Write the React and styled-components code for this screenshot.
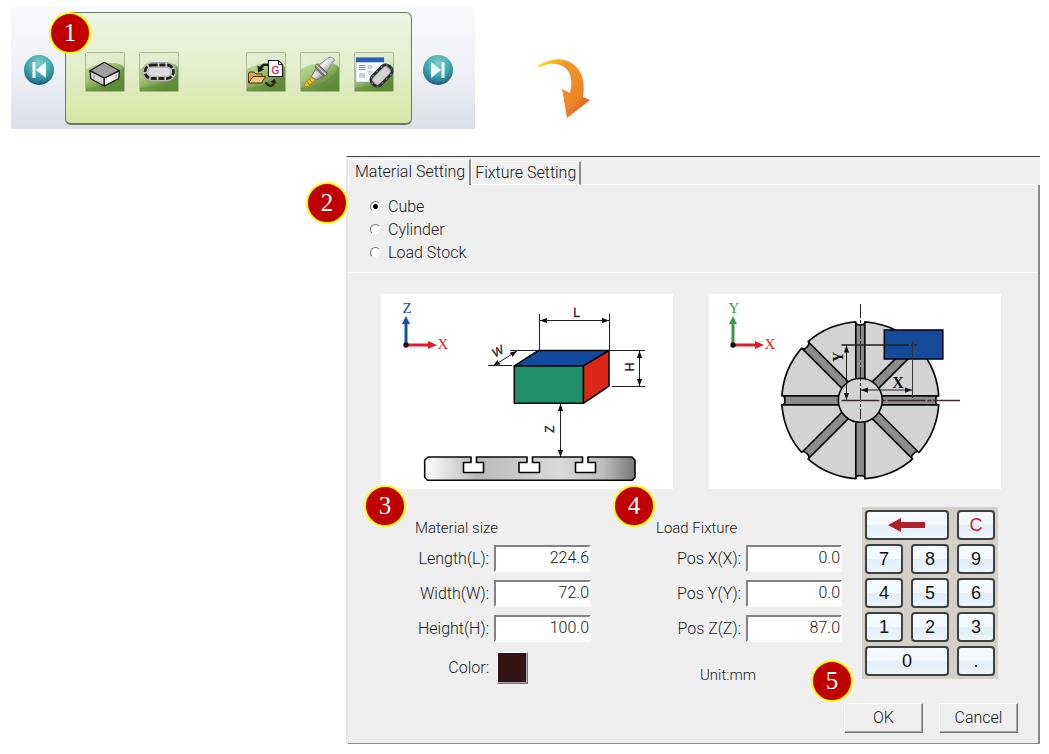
import { useState } from 'react';
import styled, { createGlobalStyle, css } from 'styled-components';

const GlobalStyle = createGlobalStyle`
  *, *::before, *::after {
    box-sizing: border-box;
  }
  body {
    margin: 0;
    background: #fff;
    color: #1a1a1a;
    font-family: Roboto, "Liberation Sans", Arial, sans-serif;
    font-weight: 300;
    font-size: 16px;
    line-height: 20px;
  }
  button, input {
    font: inherit;
    color: inherit;
  }
`;

const Page = styled.main`
  padding: 7px 9px 10px 11px;
`;

const TopRow = styled.div`
  display: flex;
  align-items: flex-start;
`;

const Ribbon = styled.nav`
  display: flex;
  align-items: center;
  gap: 11px;
  flex: 0 1 464px;
  padding: 5px 22px 4px 13px;
  background: linear-gradient(#f9fafc, #eef0f5 55%, #dcdfe8);
`;

const RoundButton = styled.button`
  flex: none;
  width: 30px;
  height: 30px;
  margin-top: 2px;
  padding: 0;
  border: none;
  border-radius: 50%;
  background: none;
  svg {
    display: block;
  }
`;

const ToolPanel = styled.div`
  position: relative;
  display: flex;
  flex: 1;
  align-items: center;
  gap: 14px;
  height: 113px;
  padding: 8px 17px 0 19px;
  border: 1px solid #6f736b;
  border-bottom-width: 2px;
  border-radius: 6px;
  background: linear-gradient(#edf4e3, #e3eecb 50%, #d7e6a3);
`;

const ToolButton = styled.button`
  width: 40px;
  height: 40px;
  padding: 0;
  border: none;
  background: none;
  margin-left: ${({ $apart }) => ($apart ? 'auto' : '0')};
  svg {
    display: block;
  }
`;

const Badge = styled.span`
  position: absolute;
  z-index: 2;
  left: ${({ $left }) => $left}px;
  top: ${({ $top }) => $top}px;
  width: 42px;
  height: 42px;
  border: 2px solid #ff0;
  border-radius: 50%;
  background: #c00000;
  color: #fff;
  font: 400 25px/38px "Liberation Serif", "Times New Roman", serif;
  text-align: center;
`;

const Swoosh = styled.svg`
  margin: 51px 0 0 62px;
`;

const Dialog = styled.form`
  margin: 27px 0 0 335px;
  border-top: 1px solid #444;
  border-left: 2px solid #e2e8ec;
  background: #efefef;
`;

const Tabs = styled.div`
  display: flex;
  align-items: flex-end;
  padding-top: 2px;
`;

const Tab = styled.button`
  height: ${({ $active }) => ($active ? 26 : 24)}px;
  padding: ${({ $active }) => ($active ? '0 4px 2px 6px' : '0 3px')};
  border: solid #fff;
  border-width: 1px 0 ${({ $active }) => ($active ? 0 : 1)}px 1px;
  border-right: 2px solid #8c8c8c;
  background: #efefef;
`;

const TabLine = styled.span`
  flex: 1;
  border-bottom: 1px solid #fff;
`;

const Sheet = styled.div`
  border: solid #8a8a8a;
  border-width: 0 2px 1px 0;
`;

const Shapes = styled.fieldset`
  position: relative;
  display: flex;
  flex-direction: column;
  margin: 0;
  padding: 10px 22px 8px;
  border: none;
  border-bottom: 1px solid #fff;
`;

const ShapeOption = styled.label`
  display: flex;
  align-items: center;
  gap: 7px;
  height: 23px;
`;

const Radio = styled.input`
  appearance: none;
  width: 11px;
  height: 11px;
  margin: 0;
  border: 1px solid;
  border-color: #777 #eee #eee #777;
  border-radius: 50%;
  background: #fff;
  &:checked {
    background: radial-gradient(circle, #000 2px, #fff 3px);
  }
`;

const Pictures = styled.div`
  display: grid;
  grid-template-columns: 1fr 1fr;
  gap: 36px;
  padding: 21px 37px 0 33px;
`;

const Picture = styled.svg`
  display: block;
  width: 100%;
  background: #fff;
`;

const Settings = styled.div`
  display: grid;
  grid-template-columns: minmax(0, 221fr) minmax(0, 186fr) 136px;
  column-gap: 20px;
  padding: 18px 40px 0 67px;
`;

const Group = styled.section`
  position: relative;
  padding: 11px ${({ $right }) => $right || 0}px 0 0;
`;

const GroupTitle = styled.h2`
  margin: 0 0 7px;
  font-size: 15px;
  font-weight: inherit;
  line-height: 20px;
`;

const Field = styled.div`
  display: flex;
  align-items: center;
  gap: 5px;
  height: 27px;
  margin-bottom: 8px;
`;

const FieldLabel = styled.label`
  flex: none;
  width: ${({ $width }) => $width}px;
  text-align: right;
`;

const inset = css`
  border: 2px solid;
  border-color: #828282 #fafafa #fafafa #828282;
`;

const raised = css`
  border: 1px solid;
  border-color: #fdfdfd #777 #777 #fdfdfd;
  box-shadow: inset -1px -1px 0 #a5a5a5;
`;

const NumberBox = styled.input`
  ${inset}
  flex: 1;
  width: 0;
  min-width: 0;
  height: 27px;
  padding: 0 0 2px;
  border-radius: 0;
  background: #fff;
  text-align: right;
  outline: none;
`;

const ColorField = styled(Field)`
  gap: 8px;
  height: 32px;
  margin: 10px 0 0;
`;

const Swatch = styled.button`
  ${raised}
  width: 31px;
  height: 32px;
  background: #321414;
`;

const Unit = styled.p`
  margin: 23px 0 0 44px;
  font-size: 15px;
`;

const KeypadArea = styled.div`
  position: relative;
`;

const Keypad = styled.div`
  display: grid;
  grid-template-columns: repeat(3, 38px);
  grid-auto-rows: 30px;
  gap: 4px 8px;
  padding: 3px;
  background: #d5d0c7;
`;

const Key = styled.button`
  display: flex;
  align-items: center;
  justify-content: center;
  grid-column: span ${({ $span }) => $span || 1};
  padding: 0;
  border: 2px solid #3d4144;
  border-radius: 4px;
  background: linear-gradient(#f7fbff, #f2f8fe 50%, #e2eefa 52%, #edf5fc);
  color: ${({ $red }) => ($red ? '#c8202c' : '#111')};
  font: 400 18px/24px "Liberation Sans", Arial, sans-serif;
`;

const Actions = styled.div`
  display: flex;
  justify-content: flex-end;
  gap: 16px;
  padding: 18px 20px 10px;
`;

const ActionButton = styled.button`
  ${raised}
  width: 79px;
  height: 30px;
  padding: 0;
  background: #efefef;
`;

const SkipIcon = ({ next }) => (
  <svg width="30" height="30" viewBox="0 0 30 30">
    <defs>
      <radialGradient id={next ? 'orbNext' : 'orbPrev'} cx="50%" cy="28%" r="75%">
        <stop offset="0" stopColor="#7fd0ca" />
        <stop offset="0.55" stopColor="#3ea6ac" />
        <stop offset="0.82" stopColor="#287a96" />
        <stop offset="1" stopColor="#1c3566" />
      </radialGradient>
    </defs>
    <circle cx="15" cy="15" r="15" fill={`url(#${next ? 'orbNext' : 'orbPrev'})`} />
    <g transform={next ? undefined : 'matrix(-1 0 0 1 30 0)'} fill="#f4fbfb">
      <path d="M8 7 18 15 8 23Z" />
      <rect x="18.500" y="7" width="3" height="16" />
    </g>
  </svg>
);

const Tile = ({ id, children }) => (
  <svg width="40" height="40" viewBox="0 0 40 40">
    <defs>
      <linearGradient id={id} x1="0" y1="0" x2="0.6" y2="1">
        <stop offset="0" stopColor="#c6dba0" />
        <stop offset="0.5" stopColor="#aacb7c" />
        <stop offset="0.75" stopColor="#7ba24f" />
        <stop offset="1" stopColor="#5f8a38" />
      </linearGradient>
    </defs>
    <rect x="0.500" y="0.500" width="39" height="39" rx="1" fill={`url(#${id})`} stroke="#a9b99a" />
    <path d="M1 36Q28 34 39 15V39H1Z" fill="#5d8738" opacity="0.45" />
    <path d="M1 1H39V15Q34 10 22 11 10 12 1 17Z" fill="#f4f8ec" opacity="0.7" />
    {children}
  </svg>
);

const BlockIcon = () => (
  <Tile id="tileBlock">
    <g stroke="#1b1b1b" strokeWidth="1.300" strokeLinejoin="round">
      <path d="M5 18.700 19.300 26V34L5.700 26.700Z" fill="#d4d4d4" />
      <path d="M34.300 18.700 19.300 26V34L33.700 26.700Z" fill="#eee" />
      <path d="M19.300 10.300 34.300 18.700 19.300 26 5 18.700Z" fill="#a0a0a0" />
    </g>
    <path d="M9 22.500V26.500M31 22.500V26.500" stroke="#999" />
  </Tile>
);

const BeltIcon = () => (
  <Tile id="tileBelt">
    <rect x="3.500" y="10.500" width="33.500" height="18.500" rx="9" fill="#c9c9c9" stroke="#a5a5a5" />
    <rect x="6" y="13" width="28.500" height="13.500" rx="6.700" fill="none" stroke="#202020" strokeWidth="2.800" strokeDasharray="6 1.700" />
    <rect x="9" y="15.500" width="22.500" height="8.700" rx="4.300" fill="#dcdcdc" stroke="#aaa" strokeWidth="0.600" />
  </Tile>
);

const LoadIcon = () => (
  <Tile id="tileLoad">
    <path d="M22.500 8.500H32.500L36.500 12.500V24.500H22.500Z" fill="#fff" stroke="#222" strokeWidth="1.200" />
    <path d="M32.500 8.500V12.500H36.500" fill="none" stroke="#222" />
    <text x="29.500" y="22" textAnchor="middle" fontFamily="Liberation Sans" fontSize="10" fontWeight="400" fill="#cf2b35" stroke="#cf2b35" strokeWidth="0.300">G</text>
    <path d="M2.500 31V21L4 20H8L10 22H16V25" fill="#d9a952" stroke="#4c3311" />
    <path d="M2.500 31 7 24.500H19.500L15.500 31Z" fill="#eec47d" stroke="#4c3311" />
    <path d="M22 13Q16.500 11.500 15 16" fill="none" stroke="#141414" strokeWidth="2.400" />
    <path d="M11.500 13.500 18.500 17.500 12 20.500Z" fill="#141414" />
    <path d="M19.500 30.500Q25 37 28 31" fill="none" stroke="#2a2015" strokeWidth="2.400" />
    <path d="M24.500 30 28.500 26.500 30.500 32Z" fill="#2a2015" />
  </Tile>
);

const CutterIcon = () => (
  <Tile id="tileCutter">
    <defs>
      <linearGradient id="steel" x1="0" y1="0" x2="1" y2="1">
        <stop offset="0.1" stopColor="#8f8f8f" />
        <stop offset="0.4" stopColor="#f2f2f2" />
        <stop offset="0.9" stopColor="#777" />
      </linearGradient>
    </defs>
    <path d="M11.500 25 15.500 28 8 34.500 4.500 34.500 5 31Z" fill="#e5c120" stroke="#a5820d" strokeWidth="0.700" />
    <path d="M7 29.500 9.500 33M9.500 27.500 12.500 30.500" stroke="#8e6c0a" strokeWidth="0.800" />
    <path d="M15.500 17 23.500 24.500 16 28 11.500 24.500Z" fill="url(#steel)" stroke="#555" strokeWidth="0.700" />
    <path d="M28.500 5.500Q33 4.500 34.500 8L26.500 20 19 13Z" fill="url(#steel)" stroke="#777" strokeWidth="0.700" />
    <path d="M17.500 12 27.500 21.500 24.500 24 15 15Z" fill="#999" stroke="#444" strokeWidth="0.800" />
    <path d="M16.500 13.500 26 22.700" stroke="#e5e5e5" strokeWidth="0.900" />
  </Tile>
);

const SetupIcon = () => (
  <Tile id="tileSetup">
    <rect x="2" y="5.500" width="28" height="24.500" fill="#fafcff" stroke="#9db2d0" strokeWidth="0.600" />
    <rect x="2" y="5.500" width="28" height="4.800" fill="#2561ba" />
    <path d="M5 13.500H11.500M5 15.500H11.500M5 17.500H11.500" stroke="#888" />
    <path d="M14 13H18.500V17H14ZM14 18.500H18.500V22.500H14ZM5 21H11V26H5Z" fill="#ccd2da" />
    <path d="M13 11V29" stroke="#dbe3ef" strokeWidth="0.700" />
    <g transform="rotate(-45 27.500 23.500)">
      <rect x="15.500" y="17.500" width="24" height="12" rx="5" fill="#aaa" stroke="#2a2a2a" strokeWidth="2.800" />
      <rect x="15.500" y="17.500" width="24" height="12" rx="5" fill="none" stroke="#888" strokeWidth="1" strokeDasharray="2 4" />
      <rect x="18" y="19.500" width="19" height="8" rx="3.500" fill="#d2d2d2" />
    </g>
  </Tile>
);

const Markers = ({ id }) => (
  <defs>
    <marker id={id} viewBox="0 0 8 6" refX="8" refY="3" markerWidth="7" markerHeight="6" markerUnits="userSpaceOnUse" orient="auto-start-reverse">
      <path d="M0 0 8 3 0 6Z" fill="#111" />
    </marker>
  </defs>
);

const Axes = ({ x, up, color }) => (
  <g fontFamily="Liberation Serif" fontSize="15" fontWeight="400">
    <path d={`M${x} 51V29`} stroke={color} strokeWidth="3" />
    <path d={`M${x - 4} 30 ${x} 22 ${x + 4} 30Z`} fill={color} />
    <path d={`M${x} 51H${x + 23}`} stroke="#d9202a" strokeWidth="3" />
    <path d={`M${x + 22} 47 ${x + 31} 51 ${x + 22} 55Z`} fill="#d9202a" />
    <circle cx={x} cy="51" r="2.700" fill="#111" />
    <text x={x + 1} y="19" textAnchor="middle" fill={color}>{up}</text>
    <text x={x + 37} y="55" textAnchor="middle" fill="#d9202a">X</text>
  </g>
);

const SLOTS = [
  [90, 95.5, 82.5, 102.5],
  [146, 151.5, 138, 158.5],
  [201.5, 207, 194.5, 214.5],
];

const CubePicture = () => (
  <Picture viewBox="0 0 292 195" role="img" aria-label="Material dimensions">
    <Markers id="tipCube" />
    <defs>
      <linearGradient id="bed">
        <stop offset="0" stopColor="#fff" />
        <stop offset="0.25" stopColor="#b9b9b9" />
        <stop offset="0.65" stopColor="#dadada" />
        <stop offset="0.85" stopColor="#bdbdbd" />
        <stop offset="1" stopColor="#777" />
      </linearGradient>
    </defs>
    <Axes x={25} up="Z" color="#14509e" />
    <g stroke="#222" strokeWidth="1">
      <path d="M158.500 20V56M228.500 20V56M129 56.500H157M107 71.500H131M228 56.500H264M231 92.500H264" />
      <g markerStart="url(#tipCube)" markerEnd="url(#tipCube)">
        <path d="M159 26.500H228" />
        <path d="M112 72 136 57" />
        <path d="M258.500 57V92" />
        <path d="M179.500 110V163" />
      </g>
    </g>
    <g stroke="#080808" strokeWidth="1.600" strokeLinejoin="round">
      <path d="M133.300 72 157.500 56.500H228L202.300 72Z" fill="#124a9d" />
      <path d="M202.300 72 228 56.500V92L202.300 109.300Z" fill="#dc2618" />
      <path d="M133.300 72H202.300V109.300H133.300Z" fill="#20906a" />
      <path
        d={`M47 163${SLOTS.map(([a, b, l, r]) => `H${a}V168.500H${l}V178.500H${r}V168.500H${b}V163`).join('')}H251L254 166V183.500L251 186.300H46.500L43.700 183.500V166Z`}
        fill="url(#bed)"
      />
    </g>
    <g fontFamily="Liberation Sans" fontSize="12" fontWeight="400" fill="#222" stroke="#222" strokeWidth="0.300" textAnchor="middle">
      <text x="195.500" y="22.500">L</text>
      <text transform="translate(119 61) rotate(-30)" fontStyle="italic">W</text>
      <text transform="translate(253 73) rotate(-90)">H</text>
      <text transform="translate(172.500 135) rotate(-90)">Z</text>
    </g>
  </Picture>
);

const TablePicture = () => (
  <Picture viewBox="0 0 292 195" role="img" aria-label="Fixture position">
    <Markers id="tipTable" />
    <Axes x={24} up="Y" color="#3a9a41" />
    <circle cx="151.300" cy="106.300" r="78.500" fill="#d3d3d3" stroke="#080808" strokeWidth="1.700" />
    {[0, 45, 90, 135, 180, 225, 270, 315].map((angle) => (
      <g key={angle} transform={`translate(151.300 106.300) rotate(${angle})`}>
        <rect x="-4.500" y="-81" width="9" height="6" fill="#fff" />
        <rect x="-4.300" y="-75.500" width="8.600" height="55" fill="#8c8c8c" />
        <path d="M-4.500 -79V-20M4.500 -79V-20M-4.500 -77Q-3 -75 0 -75.500 3 -75 4.500 -77" fill="none" stroke="#080808" strokeWidth="1.700" />
      </g>
    ))}
    <circle cx="151.300" cy="106.300" r="22" fill="#d3d3d3" stroke="#080808" strokeWidth="1.600" />
    <rect x="175.300" y="36" width="58.500" height="29" fill="#144b9b" stroke="#080820" strokeWidth="1.600" />
    <g stroke="#222" fill="none">
      <path d="M151.500 10V125" strokeDasharray="14 2 3 2" />
      <path d="M132.500 106.500H251" stroke="#3a2b2b" strokeWidth="1.400" strokeDasharray="38 2 4 2" />
      <path d="M132.500 51H200M202 51H204M205.500 51H208" strokeWidth="1.400" />
      <path d="M203.500 47.500V104" stroke="#333" />
      <path d="M137.500 51.500V106" markerStart="url(#tipTable)" markerEnd="url(#tipTable)" />
      <path d="M152 96H203" markerStart="url(#tipTable)" markerEnd="url(#tipTable)" />
    </g>
    <g fontFamily="Liberation Serif" fontWeight="700" textAnchor="middle" fill="#111">
      <text transform="translate(134 63) rotate(-90)" fontSize="14">Y</text>
      <text x="189" y="94" fontSize="16">X</text>
    </g>
  </Picture>
);

const SHAPES = ['Cube', 'Cylinder', 'Load Stock'];

const SIZE_FIELDS = [
  { name: 'length', label: 'Length(L):' },
  { name: 'width', label: 'Width(W):' },
  { name: 'height', label: 'Height(H):' },
];

const POSITION_FIELDS = [
  { name: 'x', label: 'Pos X(X):' },
  { name: 'y', label: 'Pos Y(Y):' },
  { name: 'z', label: 'Pos Z(Z):' },
];

const KEYS = ['7', '8', '9', '4', '5', '6', '1', '2', '3'];

function App() {
  const [tab, setTab] = useState('material');
  const [shape, setShape] = useState('Cube');
  const [active, setActive] = useState('length');
  const [values, setValues] = useState({
    length: '224.6', width: '72.0', height: '100.0', x: '0.0', y: '0.0', z: '87.0',
  });

  const update = (name, value) => setValues((prev) => ({ ...prev, [name]: value }));
  const press = (key) => update(active, values[active] + key);

  const renderField = (labelWidth) => ({ name, label }) => (
    <Field key={name}>
      <FieldLabel htmlFor={name} $width={labelWidth}>{label}</FieldLabel>
      <NumberBox
        id={name}
        type="text"
        inputMode="decimal"
        value={values[name]}
        onFocus={() => setActive(name)}
        onChange={(e) => update(name, e.target.value)}
      />
    </Field>
  );

  return (
    <Page>
      <GlobalStyle />
      <TopRow>
        <Ribbon>
          <RoundButton aria-label="Previous"><SkipIcon /></RoundButton>
          <ToolPanel>
            <Badge $left={-17} $top={-1}>1</Badge>
            <ToolButton aria-label="Material"><BlockIcon /></ToolButton>
            <ToolButton aria-label="Tool path"><BeltIcon /></ToolButton>
            <ToolButton aria-label="Load G code" $apart><LoadIcon /></ToolButton>
            <ToolButton aria-label="Cutter"><CutterIcon /></ToolButton>
            <ToolButton aria-label="Setup"><SetupIcon /></ToolButton>
          </ToolPanel>
          <RoundButton aria-label="Next"><SkipIcon next /></RoundButton>
        </Ribbon>
        <Swoosh width="56" height="62" viewBox="0 0 56 62" aria-hidden="true">
          <defs>
            <linearGradient id="swoosh" x1="0" y1="0.100" x2="1" y2="1">
              <stop offset="0" stopColor="#fbe30c" />
              <stop offset="0.25" stopColor="#f39a26" />
              <stop offset="0.7" stopColor="#ee8428" />
              <stop offset="1" stopColor="#e0382b" />
            </linearGradient>
          </defs>
          <path d="M1 8C12 0 26 -1 36 6 46 13 48 26 46 39L53 42 30 60 25 31 33 35C36 22 34 12 25 8 18 4 9 6 2 9.500Z" fill="url(#swoosh)" />
        </Swoosh>
      </TopRow>

      <Dialog onSubmit={(e) => e.preventDefault()}>
        <Tabs role="tablist">
          <Tab type="button" role="tab" $active={tab === 'material'} onClick={() => setTab('material')}>Material Setting</Tab>
          <Tab type="button" role="tab" $active={tab === 'fixture'} onClick={() => setTab('fixture')}>Fixture Setting</Tab>
          <TabLine />
        </Tabs>

        <Sheet>
          <Shapes aria-label="Shape">
            <Badge $left={-42} $top={-3}>2</Badge>
            {SHAPES.map((name) => (
              <ShapeOption key={name}>
                <Radio type="radio" name="shape" checked={shape === name} onChange={() => setShape(name)} />
                {name}
              </ShapeOption>
            ))}
          </Shapes>

          <Pictures>
            <CubePicture />
            <TablePicture />
          </Pictures>

          <Settings>
            <Group $right={45}>
              <Badge $left={-51} $top={-22}>3</Badge>
              <GroupTitle>Material size</GroupTitle>
              {SIZE_FIELDS.map(renderField(74))}
              <ColorField>
                <FieldLabel htmlFor="color" $width={74}>Color:</FieldLabel>
                <Swatch id="color" type="button" />
              </ColorField>
            </Group>

            <Group>
              <Badge $left={-43} $top={-22}>4</Badge>
              <GroupTitle>Load Fixture</GroupTitle>
              {POSITION_FIELDS.map(renderField(85))}
              <Unit>Unit:mm</Unit>
            </Group>

            <KeypadArea>
              <Badge $left={-51} $top={153}>5</Badge>
              <Keypad>
                <Key type="button" $span={2} aria-label="Backspace" onClick={() => update(active, values[active].slice(0, -1))}>
                  <svg width="38" height="14" viewBox="0 0 38 14">
                    <path d="M0 7 13 0V4H37V10H13V14Z" fill="#b31f2b" />
                  </svg>
                </Key>
                <Key type="button" $red onClick={() => update(active, '')}>C</Key>
                {KEYS.map((key) => (
                  <Key type="button" key={key} onClick={() => press(key)}>{key}</Key>
                ))}
                <Key type="button" $span={2} onClick={() => press('0')}>0</Key>
                <Key type="button" onClick={() => press('.')}>.</Key>
              </Keypad>
            </KeypadArea>
          </Settings>

          <Actions>
            <ActionButton type="submit">OK</ActionButton>
            <ActionButton type="button">Cancel</ActionButton>
          </Actions>
        </Sheet>
      </Dialog>
    </Page>
  );
}

export default App;
